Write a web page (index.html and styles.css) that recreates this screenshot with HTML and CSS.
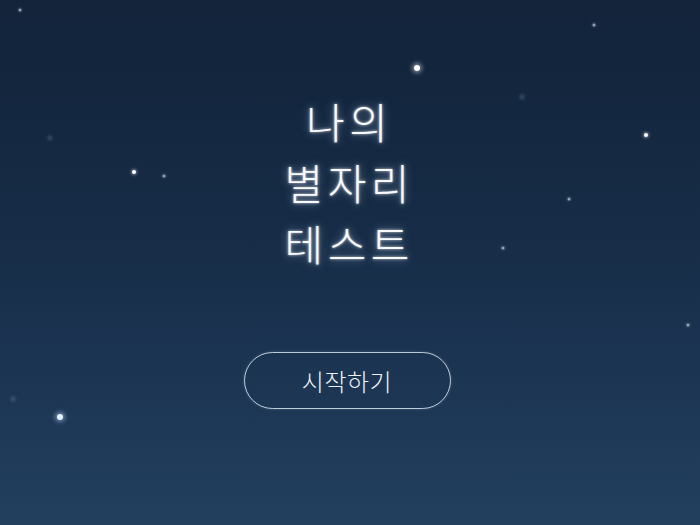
FILE: index.html
```html
<!DOCTYPE html>
<html lang="ko">
<head>
<meta charset="utf-8">
<title>나의 별자리 테스트</title>
<link rel="stylesheet" href="styles.css">
</head>
<body>
<div class="sky">
  <span class="star s-dim" style="left:20px;top:10px"></span>
  <span class="star s-big" style="left:417px;top:68px"></span>
  <span class="star s-dim" style="left:594px;top:25px"></span>
  <span class="star s-haze" style="left:522px;top:97px"></span>
  <span class="star s-mid" style="left:646px;top:135px"></span>
  <span class="star s-haze" style="left:50px;top:138px"></span>
  <span class="star s-mid" style="left:134px;top:172px"></span>
  <span class="star s-dim" style="left:164px;top:176px"></span>
  <span class="star s-dim" style="left:569px;top:199px"></span>
  <span class="star s-dim" style="left:503px;top:248px"></span>
  <span class="star s-dim" style="left:688px;top:325px"></span>
  <span class="star s-haze" style="left:13px;top:399px"></span>
  <span class="star s-big s-blue" style="left:60px;top:417px"></span>

  <main class="intro">
    <h1 class="title">
      <span class="title-line">나의</span>
      <span class="title-line">별자리</span>
      <span class="title-line">테스트</span>
    </h1>
    <button class="start" type="button">시작하기</button>
  </main>
</div>
</body>
</html>
```
FILE: styles.css
```css
* { box-sizing: border-box; }

html, body {
  margin: 0;
  height: 100%;
}

body {
  font-family: "Noto Sans CJK KR", "Noto Sans", sans-serif;
  color: #f4f7fb;
}

.sky {
  position: relative;
  width: 100%;
  height: 100%;
  overflow: hidden;
  background: linear-gradient(180deg, #12233a 0%, #162b45 40%, #1c3654 75%, #23405f 100%);
}

.star {
  position: absolute;
  border-radius: 50%;
  transform: translate(-50%, -50%);
  background: #fff;
}

.s-big {
  width: 6px;
  height: 6px;
  box-shadow: 0 0 4px 2px rgba(255, 255, 255, 0.45);
}

.s-blue {
  background: #e6f0ff;
  box-shadow: 0 0 4px 2px rgba(190, 215, 255, 0.5);
}

.s-mid {
  width: 4px;
  height: 4px;
  box-shadow: 0 0 3px 1px rgba(255, 255, 255, 0.4);
}

.s-dim {
  width: 3px;
  height: 3px;
  background: rgba(200, 215, 230, 0.7);
  box-shadow: 0 0 2px 1px rgba(200, 215, 230, 0.2);
}

.s-haze {
  width: 5px;
  height: 5px;
  background: rgba(120, 150, 185, 0.35);
  filter: blur(1.5px);
}

/* content column sits a touch left of the window centre */
.intro {
  position: relative;
  display: flex;
  flex-direction: column;
  align-items: center;
  padding: 90px 6px 0 0;
}

.title {
  margin: 0;
  display: flex;
  flex-direction: column;
  align-items: center;
  font-size: 42px;
  font-weight: 300;
  letter-spacing: 4.5px;
  color: #f8fafd;
  text-shadow:
    0 0 3px rgba(255, 255, 255, 0.8),
    0 0 10px rgba(200, 225, 255, 0.55);
}

/* trailing letter-spacing is pulled back so each line stays centred */
.title-line {
  display: flex;
  align-items: center;
  height: 61px;
  line-height: 1;
  margin-right: -4.5px;
}

.start {
  margin-top: 79px;
  width: 207px;
  height: 57px;
  border: 1.5px solid rgba(220, 230, 242, 0.85);
  border-radius: 29px;
  background: transparent;
  color: #eef2f7;
  font-family: "Noto Sans CJK KR", "Noto Sans", sans-serif;
  font-size: 24px;
  font-weight: 300;
  letter-spacing: 0.5px;
  box-shadow: 0 0 3px rgba(200, 220, 240, 0.25);
  cursor: pointer;
}
```
